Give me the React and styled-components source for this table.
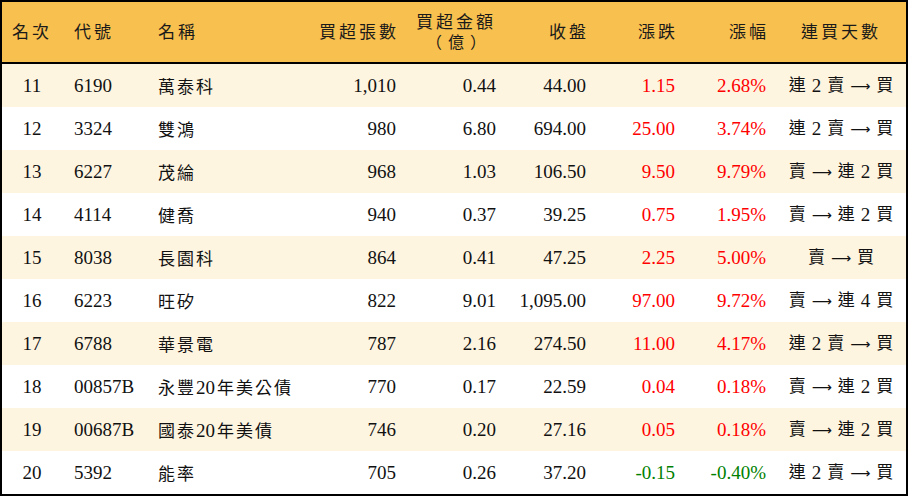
import styled, { createGlobalStyle } from 'styled-components'

const GlobalStyle = createGlobalStyle`
    html, body {
        margin: 0;
        padding: 0;
        background: #ffffff;
    }
`

const columns = '60px 88px 150px 106px 100px 90px 89px 91px 130px'

const Board = styled.div`
    width: 908px;
    height: 496px;
    box-sizing: border-box;
    border: 2px solid #000000;
    font-family: "Liberation Serif", "Noto Sans CJK TC", serif;
    color: #111111;
    overflow: hidden;
`

const HeadRow = styled.div`
    display: grid;
    grid-template-columns: ${columns};
    height: 60px;
    background-color: #F8C04E;
    border-bottom: 2px solid #000000;
`

const HeadCell = styled.div`
    display: flex;
    flex-direction: column;
    justify-content: center;
    gap: 3px;
    align-items: ${({ $align }) => $align === 'right' ? 'flex-end' : $align === 'left' ? 'flex-start' : 'center'};
    padding: ${({ $align, $indent }) => $align === 'right' ? '0 7px 0 0' : $align === 'left' ? `0 0 0 ${$indent || 12}px` : '0'};
    font-family: "Liberation Serif", "Noto Sans CJK TC", serif;
    font-size: 17px;
    letter-spacing: 3px;
    line-height: 17px;
    color: #1a1a1a;
`

const UnitLine = styled.span`
    letter-spacing: 0;
    font-size: 16px;
    word-spacing: 2px;
`

const Row = styled.div`
    display: grid;
    grid-template-columns: ${columns};
    height: 43px;
    background-color: ${({ $striped }) => $striped ? '#FEF5E1' : '#ffffff'};
`

const Cell = styled.div`
    display: flex;
    align-items: center;
    justify-content: ${({ $align }) => $align === 'right' ? 'flex-end' : $align === 'left' ? 'flex-start' : 'center'};
    padding: ${({ $align, $indent }) => $align === 'right' ? '0 10px 0 0' : $align === 'left' ? `0 0 0 ${$indent || 12}px` : '0'};
    font-size: 19px;
    white-space: nowrap;
    color: ${({ $tone }) => $tone === 'up' ? '#FF0000' : $tone === 'down' ? '#008000' : '#111111'};
`

const NameText = styled.span`
    font-family: "Liberation Serif", "Noto Sans CJK TC", serif;
    font-size: 17px;
    letter-spacing: 2px;
`

const NameDigits = styled.span`
    font-size: 19px;
    letter-spacing: 0;
    margin-right: 2px;
`

const Streak = styled.span`
    display: flex;
    align-items: center;
    gap: 6px;
`

const Token = styled.span`
    font-family: ${({ $kind }) => $kind === 'arrow' ? '"DejaVu Sans", sans-serif' : '"Liberation Serif", "Noto Sans CJK TC", serif'};
    font-size: ${({ $kind }) => $kind === 'cjk' ? '17px' : $kind === 'arrow' ? '14px' : '19px'};
    line-height: 1;
`

const rows = [
    ['11', '6190', '萬泰科', '1,010', '0.44', '44.00', '1.15', '2.68%', '連 2 賣 → 買'],
    ['12', '3324', '雙鴻', '980', '6.80', '694.00', '25.00', '3.74%', '連 2 賣 → 買'],
    ['13', '6227', '茂綸', '968', '1.03', '106.50', '9.50', '9.79%', '賣 → 連 2 買'],
    ['14', '4114', '健喬', '940', '0.37', '39.25', '0.75', '1.95%', '賣 → 連 2 買'],
    ['15', '8038', '長園科', '864', '0.41', '47.25', '2.25', '5.00%', '賣 → 買'],
    ['16', '6223', '旺矽', '822', '9.01', '1,095.00', '97.00', '9.72%', '賣 → 連 4 買'],
    ['17', '6788', '華景電', '787', '2.16', '274.50', '11.00', '4.17%', '連 2 賣 → 買'],
    ['18', '00857B', '永豐20年美公債', '770', '0.17', '22.59', '0.04', '0.18%', '賣 → 連 2 買'],
    ['19', '00687B', '國泰20年美債', '746', '0.20', '27.16', '0.05', '0.18%', '賣 → 連 2 買'],
    ['20', '5392', '能率', '705', '0.26', '37.20', '-0.15', '-0.40%', '連 2 賣 → 買'],
]

const kindOf = (t) => t === '→' ? 'arrow' : /\d/.test(t) ? 'digit' : 'cjk'

function StockName({ name }) {
    return (
        <NameText>
            {name.split(/(\d+)/).filter(Boolean).map((part, i) =>
                /\d/.test(part) ? <NameDigits key={i}>{part}</NameDigits> : part
            )}
        </NameText>
    )
}

function StreakLabel({ text }) {
    return (
        <Streak>
            {text.split(' ').map((t, i) => (
                <Token key={i} $kind={kindOf(t)}>{t === '→' ? '⟶' : t}</Token>
            ))}
        </Streak>
    )
}

function App() {
    return (
        <>
            <GlobalStyle />
            <Board>
                <HeadRow>
                    <HeadCell>名次</HeadCell>
                    <HeadCell $align="left">代號</HeadCell>
                    <HeadCell $align="left" $indent={8}>名稱</HeadCell>
                    <HeadCell $align="right">買超張數</HeadCell>
                    <HeadCell>
                        <span>買超金額</span>
                        <UnitLine>（ 億 ）</UnitLine>
                    </HeadCell>
                    <HeadCell $align="right">收盤</HeadCell>
                    <HeadCell $align="right">漲跌</HeadCell>
                    <HeadCell $align="right">漲幅</HeadCell>
                    <HeadCell>連買天數</HeadCell>
                </HeadRow>
                {rows.map((r, i) => {
                    const tone = r[6].startsWith('-') ? 'down' : 'up'
                    return (
                        <Row key={r[0]} $striped={i % 2 === 0}>
                            <Cell>{r[0]}</Cell>
                            <Cell $align="left">{r[1]}</Cell>
                            <Cell $align="left" $indent={8}><StockName name={r[2]} /></Cell>
                            <Cell $align="right">{r[3]}</Cell>
                            <Cell $align="right">{r[4]}</Cell>
                            <Cell $align="right">{r[5]}</Cell>
                            <Cell $align="right" $tone={tone}>{r[6]}</Cell>
                            <Cell $align="right" $tone={tone}>{r[7]}</Cell>
                            <Cell><StreakLabel text={r[8]} /></Cell>
                        </Row>
                    )
                })}
            </Board>
        </>
    )
}

export default App
